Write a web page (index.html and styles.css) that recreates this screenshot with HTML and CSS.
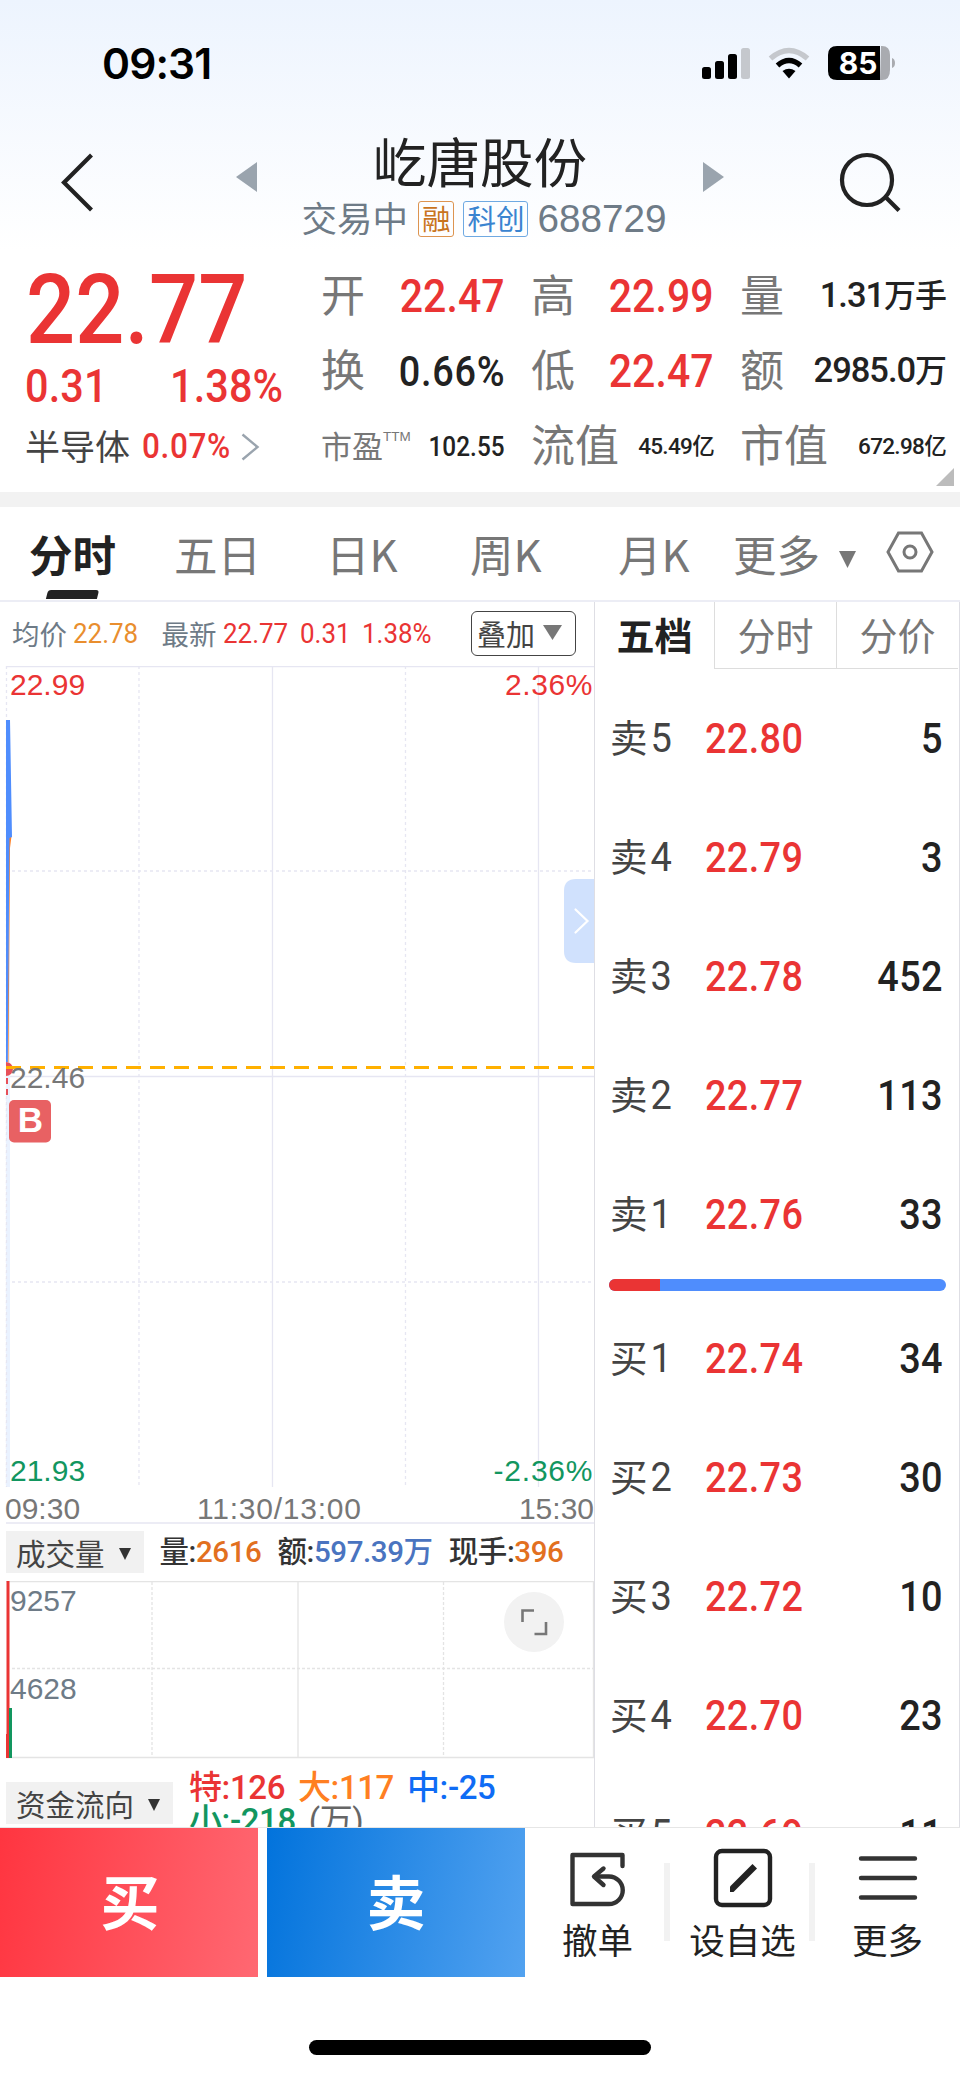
FILE: index.html
```html
<!DOCTYPE html>
<html lang="zh-CN">
<head>
    <meta charset="UTF-8">
    <meta name="viewport" content="width=device-width, initial-scale=1.0">
    <title>屹唐股份 688729</title>
    <link rel="stylesheet" href="styles.css">
</head>
<body>
    <div class="screen">
        <!-- Status bar -->
        <div class="status-bar">
            <span class="clock">09:31</span>
            <svg class="status-icons" width="194" height="36" viewBox="0 0 194 36">
                <rect x="0" y="21" width="9" height="12" rx="2.5"/>
                <rect x="13" y="15" width="9" height="18" rx="2.5"/>
                <rect x="26" y="8" width="9" height="25" rx="2.5"/>
                <rect x="39" y="2" width="9" height="31" rx="2.5" fill="#c5c8cd"/>
                <path d="M68.5 12.5 Q87 -3.5 105.5 12.5" fill="none" stroke="#c5c8cd" stroke-width="5.5"/>
                <path d="M75.5 19.5 Q87 9.5 98.5 19.5" fill="none" stroke="#000" stroke-width="5.5"/>
                <path d="M80.5 25 Q87 20.5 93.5 25 L87 32.5 Z"/>
                <path d="M179 0 H180 Q188 0 188 9 V24 Q188 34 180 34 H178 Z" fill="#a9abb0"/>
                <path d="M135 0 H178 V34 H135 Q126 34 126 25 V9 Q126 0 135 0 Z"/>
                <path d="M190 12 Q193 13 193 17 Q193 21 190 22 Z" fill="#a9abb0"/>
                <text class="battery-text" x="156" y="28">85</text>
            </svg>
        </div>

        <!-- Header -->
        <div class="header">
            <svg class="back" width="40" height="60" viewBox="0 0 40 60"><path d="M33.5 3 L6 30.5 L33.5 58"/></svg>
            <div class="arrow prev"></div>
            <div class="stock">
                <div class="stock-name">屹唐股份</div>
                <div class="stock-sub">
                    <span class="state">交易中</span>
                    <span class="badge orange">融</span>
                    <span class="badge blue">科创</span>
                    <span class="code">688729</span>
                </div>
            </div>
            <div class="arrow next"></div>
            <svg class="search" width="64" height="64" viewBox="0 0 64 64"><circle cx="29" cy="29" r="25"/><path d="M47.5 46 L61 59.5"/></svg>
        </div>

        <!-- Quote -->
        <div class="quote">
            <div class="quote-main">
                <div class="last red"><span class="num">22.77</span></div>
                <div class="change red"><span class="num">0.31</span><span class="num">1.38%</span></div>
                <div class="sector">
                    <span class="sector-name">半导体</span>
                    <span class="num red">0.07%</span>
                    <svg width="20" height="28" viewBox="0 0 20 28"><path d="M1.5 1.5 L16.5 14 L1.5 26.5"/></svg>
                </div>
            </div>
            <div class="quote-grid">
                <div class="cell"><span class="label">开</span><span class="num big red">22.47</span></div>
                <div class="cell"><span class="label">高</span><span class="num big red">22.99</span></div>
                <div class="cell"><span class="label">量</span><span class="amount mid">1.31<b>万手</b></span></div>
                <div class="cell"><span class="label">换</span><span class="num pct">0.66%</span></div>
                <div class="cell"><span class="label">低</span><span class="num big red">22.47</span></div>
                <div class="cell"><span class="label">额</span><span class="amount mid">2985.0<b>万</b></span></div>
                <div class="cell"><span class="label small">市盈<sup>TTM</sup></span><span class="num pe">102.55</span></div>
                <div class="cell"><span class="label">流值</span><span class="amount tiny">45.49<b>亿</b></span></div>
                <div class="cell"><span class="label">市值</span><span class="amount tiny">672.98<b>亿</b></span></div>
            </div>
            <div class="corner"></div>
        </div>

        <!-- Period tabs -->
        <div class="tabs">
            <span class="tab active">分时</span>
            <span class="tab">五日</span>
            <span class="tab">日K</span>
            <span class="tab">周K</span>
            <span class="tab">月K</span>
            <span class="tab">更多</span>
            <svg class="tab-caret" width="17" height="17" viewBox="0 0 17 17"><path d="M0 0 H17 L8.5 17 Z"/></svg>
            <svg class="tab-gear" width="48" height="42" viewBox="0 0 48 42"><path d="M12.5 2 H35.5 L46 21 L35.5 40 H12.5 L2 21 Z"/><circle cx="24" cy="21" r="6"/></svg>
        </div>

        <div class="main">
            <div class="left">
                <div class="info">
                    <span class="info-label">均价</span>
                    <span class="info-num avg">22.78</span>
                    <span class="info-label latest">最新</span>
                    <span class="info-num red">22.77</span>
                    <span class="info-num red">0.31</span>
                    <span class="info-num red">1.38%</span>
                    <span class="overlay-btn">叠加<svg width="19" height="15" viewBox="0 0 19 15"><path d="M0 0 H19 L9.5 15 Z"/></svg></span>
                </div>

                <!-- Price chart -->
                <svg class="price-chart" width="594" height="859" viewBox="0 666 594 859">
                    <g class="grid">
                        <path d="M6 666.5 H594 M272.5 666 V1487 M538.5 666 V1487 M6 1076.5 H594"/>
                        <path class="dash" d="M6.5 666 V1487 M139 666 V1487 M405.5 666 V1487 M12 871 H594 M12 1282 H594"/>
                        <path class="base" d="M6 1523 H594"/>
                    </g>
                    <rect x="6" y="845" width="4" height="642" fill="#eaf2ff"/>
                    <path class="dash-line" d="M6.5 1096 V1487"/>
                    <path d="M9 836 H11.5 L10 848 L8.5 1062 H7.5 Z" fill="#ff7f22"/>
                    <path d="M6 720 H10 L12 837 L9.5 838 L7.8 1062 H6 Z" fill="#4f8dfd"/>
                    <path d="M7 1078 V1095" stroke="#e75059" stroke-width="2" stroke-dasharray="6 5"/>
                    <path d="M6 1062 A7 7 0 0 1 6 1076 Z" fill="#e75059"/>
                    <path d="M6 1067.5 H594" stroke="#ffb000" stroke-width="3" stroke-dasharray="15 9"/>
                    <text class="red" x="10" y="695">22.99</text>
                    <text class="red" x="505" y="695" textLength="87.5">2.36%</text>
                    <text x="10" y="1088">22.46</text>
                    <text class="green" x="10" y="1481">21.93</text>
                    <text class="green" x="493.5" y="1481" textLength="99">-2.36%</text>
                    <text x="5" y="1519">09:30</text>
                    <text x="197" y="1519" textLength="164">11:30/13:00</text>
                    <text class="end" x="594" y="1519">15:30</text>
                    <rect x="9" y="1100" width="42" height="42.5" rx="5" fill="#e86163"/>
                    <text class="buy-mark" x="30.5" y="1132">B</text>
                    <path d="M594 879 H576 Q564 879 564 891 V951 Q564 963 576 963 H594 Z" fill="#d0e1fd"/>
                    <path d="M575.5 909.5 L587.5 921 L575.5 932.5" fill="none" stroke="#fff" stroke-width="2.2" stroke-linecap="round"/>
                </svg>

                <!-- Volume -->
                <div class="vol-head">
                    <span class="picker">成交量<svg width="12" height="12" viewBox="0 0 12 12"><path d="M0 0 H12 L6 12 Z"/></svg></span>
                    <span class="stat">量:<i class="c-orange">2616</i></span>
                    <span class="stat">额:<i class="c-blue">597.39万</i></span>
                    <span class="stat">现手:<i class="c-orange">396</i></span>
                </div>
                <svg class="vol-chart" width="594" height="178" viewBox="0 1581 594 178">
                    <g class="vgrid">
                        <path d="M6 1581.5 H593.5 V1757.5 H6 M298 1582 V1757"/>
                        <path class="dash" d="M152 1582 V1757 M443.5 1582 V1757 M12 1668.5 H593"/>
                    </g>
                    <rect x="6.5" y="1581" width="3" height="177" fill="#ea3434"/>
                    <rect x="6" y="1734" width="3" height="24" fill="#ea3434"/>
                    <rect x="9" y="1708" width="3" height="50" fill="#12965f"/>
                    <text x="10" y="1611">9257</text>
                    <text x="10" y="1699">4628</text>
                    <circle cx="534" cy="1622" r="30" fill="#f2f2f2"/>
                    <path d="M522.5 1622 V1610.5 H534 M546 1622 V1634 H534.5" fill="none" stroke="#777" stroke-width="2.6"/>
                </svg>

                <!-- Money flow -->
                <div class="flow">
                    <span class="picker">资金流向<svg width="12" height="12" viewBox="0 0 12 12"><path d="M0 0 H12 L6 12 Z"/></svg></span>
                    <div class="flow-values">
                        <div><span class="red">特:126</span><span class="c-amber">大:117</span><span class="c-azure">中:-25</span></div>
                        <div><span class="green">小:-218</span><span class="unit">(万)</span></div>
                    </div>
                </div>
            </div>

            <!-- Order book -->
            <div class="right">
                <div class="book-tabs">
                    <span class="active">五档</span>
                    <span>分时</span>
                    <span>分价</span>
                </div>
                <div class="book">
                    <div class="row"><span class="side">卖<i>5</i></span><span class="price">22.80</span><span class="qty">5</span></div>
                    <div class="row"><span class="side">卖<i>4</i></span><span class="price">22.79</span><span class="qty">3</span></div>
                    <div class="row"><span class="side">卖<i>3</i></span><span class="price">22.78</span><span class="qty">452</span></div>
                    <div class="row"><span class="side">卖<i>2</i></span><span class="price">22.77</span><span class="qty">113</span></div>
                    <div class="row"><span class="side">卖<i>1</i></span><span class="price">22.76</span><span class="qty">33</span></div>
                    <div class="ratio"><div class="ratio-buy" style="width: 15.2%"></div></div>
                    <div class="row"><span class="side">买<i>1</i></span><span class="price">22.74</span><span class="qty">34</span></div>
                    <div class="row"><span class="side">买<i>2</i></span><span class="price">22.73</span><span class="qty">30</span></div>
                    <div class="row"><span class="side">买<i>3</i></span><span class="price">22.72</span><span class="qty">10</span></div>
                    <div class="row"><span class="side">买<i>4</i></span><span class="price">22.70</span><span class="qty">23</span></div>
                    <div class="row"><span class="side">买<i>5</i></span><span class="price">22.69</span><span class="qty">11</span></div>
                </div>
            </div>
        </div>

        <!-- Trade bar -->
        <div class="trade-bar">
            <div class="trade buy">买</div>
            <div class="trade sell">卖</div>
            <div class="action">
                <svg width="60" height="60" viewBox="0 0 60 60">
                    <path d="M54.5 18 V7 H4.5 V56 H41 A13.5 13.5 0 0 0 41 28.5 H27" stroke="#333"/>
                    <path d="M35.5 20.5 L26 28.5 L35.5 37" stroke="#333"/>
                </svg>
                <span>撤单</span>
            </div>
            <div class="divider"></div>
            <div class="action">
                <svg width="60" height="60" viewBox="0 0 60 60">
                    <rect x="3" y="3" width="54" height="54" rx="6"/>
                    <path d="M17 44 V38.5 L39.5 16 L44 20.5 L20.5 44 Z" class="pen"/>
                </svg>
                <span>设自选</span>
            </div>
            <div class="divider"></div>
            <div class="action last-action">
                <svg width="60" height="60" viewBox="0 0 60 60"><path d="M3 10.5 H57 M3 30 H57 M3 49.5 H57" stroke="#333"/></svg>
                <span>更多</span>
            </div>
        </div>
        <div class="home-indicator"></div>
    </div>
</body>
</html>
```

FILE: styles.css
```css
* {
    box-sizing: border-box;
}

body {
    margin: 0;
    background: #fff;
    font-family: "Noto Sans CJK SC", sans-serif;
    color: #222;
}

i, b {
    font-style: normal;
    font-weight: inherit;
}

.screen {
    width: 960px;
    height: 2079px;
    overflow: hidden;
    display: flex;
    flex-direction: column;
    background: linear-gradient(#edf4fe 0, #fff 250px);
}

.red { color: #ea3434; }
.green { color: #12965f; }
.c-orange { color: #e2701f; }
.c-blue { color: #4a74c0; }
.c-amber { color: #ff7f22; }
.c-azure { color: #0f6cf5; }

/* Narrow figures for prices */
.num {
    display: block;
    font-family: Roboto, sans-serif;
    font-weight: 500;
    letter-spacing: 0.003em;
    transform: scaleX(0.9);
    transform-origin: left center;
}

.amount {
    font-family: Roboto, "Noto Sans CJK SC", sans-serif;
    font-weight: 500;
    letter-spacing: -0.03em;
}

/* Status bar */
.status-bar {
    height: 128px;
    padding: 0 64px 0 102px;
    display: flex;
    align-items: center;
    justify-content: space-between;
}

.clock {
    font: 600 42.5px/50px Inter, sans-serif;
    letter-spacing: -0.9px;
    color: #000;
}

.battery-text {
    font: 700 30px Inter, sans-serif;
    fill: #fff;
    text-anchor: middle;
}

/* Header */
.header {
    height: 127px;
    display: grid;
    grid-template-columns: 236px 21px 446px 21px 1fr;
    align-items: start;
}

.back, .search {
    fill: none;
    stroke: #222;
    stroke-width: 4.2;
}

.back {
    margin: 24px 0 0 58px;
}

.search {
    margin: 23px 0 0 114px;
}

.arrow {
    width: 21px;
    height: 30px;
    margin-top: 34px;
    background: #9aa4ae;
}

.prev { clip-path: polygon(100% 0, 100% 100%, 0 50%); }
.next { clip-path: polygon(0 0, 100% 50%, 0 100%); }

.stock {
    display: flex;
    flex-direction: column;
    align-items: center;
}

.stock-name {
    font-size: 53.5px;
    line-height: 64px;
}

.stock-sub {
    display: flex;
    align-items: center;
    height: 54px;
    margin-left: 8px;
    color: #6e7b87;
}

.state {
    font-size: 35.5px;
    line-height: 40px;
    margin-top: -4px;
}

.badge {
    height: 36px;
    padding: 0 3px;
    font-size: 28.5px;
    line-height: 31px;
    border: 1.5px solid;
    border-radius: 3px;
    margin-left: 10px;
}

.badge.blue { margin-left: 9px; }
.orange { color: #c9741e; border-color: #dd9450; }
.blue { color: #3a84d0; border-color: #6fa9e2; }

.code {
    font: 38.7px/40px "Liberation Sans", sans-serif;
    margin-left: 9px;
}

/* Quote */
.quote {
    position: relative;
    height: 237px;
    display: flex;
    background: #fff;
}

.quote-main {
    width: 321px;
    padding-left: 25px;
}

.last {
    height: 110px;
    padding-left: 1px;
    font-size: 96px;
    line-height: 110px;
}

.change {
    display: flex;
    justify-content: space-between;
    width: 271px;
    font-size: 46px;
    line-height: 42px;
}

.sector {
    display: flex;
    align-items: center;
    height: 80px;
    font-size: 35px;
    line-height: 40px;
}

.sector-name {
    color: #444;
    margin-top: -4px;
}

.sector .num {
    margin-left: 12px;
    letter-spacing: 0.02em;
}

.sector svg {
    fill: none;
    stroke: #9aa4ae;
    stroke-width: 2.4;
}

.quote-grid {
    display: grid;
    grid-template-columns: 184px 183px 206px;
    grid-template-rows: 75px 75px 75px;
    column-gap: 26px;
    padding-top: 4px;
}

.cell {
    display: flex;
    align-items: center;
    justify-content: space-between;
    white-space: nowrap;
    line-height: 50px;
}

.cell .num { transform-origin: right center; }

.label {
    font-size: 44px;
    color: #777;
    margin-top: -7px;
}

.label.small {
    font-size: 31px;
    margin-top: -3px;
}

.label sup {
    font: 13.5px/13px "Liberation Sans", sans-serif;
    vertical-align: 17px;
}

.big { font-size: 45.5px; }
.pct { font-size: 42px; letter-spacing: 0.02em; }
.mid { font-size: 34.5px; }
.mid b { font-size: 32px; }
.pe { font-size: 27px; }
.tiny { font-size: 22.5px; }
.amount { margin-top: -2px; }

.corner {
    position: absolute;
    right: 6px;
    bottom: 6px;
    width: 18px;
    height: 18px;
    background: #bcbcbc;
    clip-path: polygon(100% 0, 100% 100%, 0 100%);
}

/* Tabs */
.tabs {
    height: 110px;
    border-top: 15px solid #f2f2f2;
    border-bottom: 2px solid #ecedf5;
    padding-left: 29px;
    display: grid;
    grid-template-columns: 145px 152px 144px 148px 115px 106px 47px 50px;
    align-items: center;
    background: #fff;
    font-size: 43.5px;
    color: #777;
}

.tab {
    line-height: 91px;
    margin-top: -1px;
}

.tab.active {
    position: relative;
    color: #222;
    font-weight: 700;
}

.tab.active::after {
    content: "";
    position: absolute;
    left: 18px;
    bottom: 0;
    width: 51px;
    height: 9px;
    border-radius: 3px 3px 0 0;
    background: #222;
    transform: skewX(-14deg);
}

.tab-caret { fill: #777; margin-top: 12px; }

.tab-gear {
    fill: none;
    stroke: #777;
    stroke-width: 3;
    margin-top: -4px;
}

/* Main area */
.main {
    height: 1226px;
    display: flex;
    overflow: hidden;
    border-bottom: 1px solid #e6e6e6;
    background: #fff;
}

.left {
    width: 594px;
    flex: none;
}

.left svg { display: block; }

.info {
    height: 64px;
    padding-left: 12px;
    display: flex;
    align-items: center;
}

.info-label {
    font-size: 27.5px;
    line-height: 32px;
    color: #6e7b87;
    margin-top: -3px;
}

.latest { margin-left: 17px; }

.info-num {
    font: 400 28.5px/32px Roboto, sans-serif;
    margin-left: 6px;
    transform: scaleX(0.91);
    transform-origin: left center;
}

.info-num + .info-num { margin-left: 6px; }
.avg { color: #e98e2e; }

.overlay-btn {
    display: flex;
    align-items: center;
    width: 105px;
    height: 45px;
    margin: -2px 18px 0 auto;
    padding-left: 5px;
    border: 1.5px solid #444;
    border-radius: 6px;
    font-size: 29px;
    line-height: 36px;
    color: #444;
}

.overlay-btn svg {
    margin: -2px 0 0 8px;
    fill: #777;
}

.price-chart text, .vol-chart text {
    font: 30px "Liberation Sans", sans-serif;
    fill: #777;
}

.vol-chart text { fill: #6e7b87; }
.price-chart .red { fill: #ea3434; }
.price-chart .green { fill: #12965f; }
.price-chart .end { text-anchor: end; }

.price-chart .buy-mark {
    font-size: 35px;
    font-weight: 700;
    fill: #fff;
    text-anchor: middle;
}

.grid path, .vgrid path, .dash-line {
    fill: none;
    stroke: #e6e6f2;
    stroke-width: 1.3;
}

.vgrid path { stroke: #e4e4e4; }
.grid .dash, .dash-line { stroke-dasharray: 3 3; }
.vgrid .dash { stroke-dasharray: 3 2; }

/* Indicator headers */
.vol-head {
    height: 56px;
    padding-left: 6px;
    display: flex;
    align-items: center;
}

.picker {
    display: flex;
    align-items: center;
    height: 42px;
    padding: 0 13px 0 10px;
    background: #f1f1f1;
    font-size: 29.5px;
    line-height: 38px;
    color: #444;
}

.picker svg {
    margin: 4px 0 0 14px;
    fill: #333;
}

.vol-head .picker { margin-top: -2px; }

.stat {
    font: 500 29.5px/40px Roboto, "Noto Sans CJK SC", sans-serif;
    letter-spacing: -0.4px;
    color: #333;
    margin-left: 16px;
    margin-top: -2px;
}

.flow {
    height: 90px;
    padding: 23px 0 0 6px;
    display: flex;
    align-items: flex-start;
}

.flow-values {
    margin: -11px 0 0 16px;
    font: 500 33px/33px Roboto, "Noto Sans CJK SC", sans-serif;
    letter-spacing: -0.4px;
}

.flow-values div {
    display: flex;
    gap: 13px;
}

.unit {
    color: #666;
    font-weight: 400;
}

/* Order book */
.right {
    flex: 1;
    border-left: 1.5px solid #dedee4;
    border-right: 1px solid #dedee4;
}

.book-tabs {
    display: flex;
    height: 67px;
    font-size: 38px;
    line-height: 63px;
    text-align: center;
    color: #777;
}

.book-tabs span {
    width: 122px;
    border-left: 1.5px solid #ddd;
    border-bottom: 1.5px solid #ddd;
}

.book-tabs .active {
    width: 119px;
    border: none;
    color: #222;
    font-weight: 700;
}

.book {
    padding: 10px 16px 0 15px;
}

.row {
    height: 119px;
    display: flex;
    align-items: center;
}

.side {
    width: 95px;
    font-size: 37.5px;
    line-height: 44px;
    color: #444;
    margin-top: -2px;
}

.side i {
    display: inline-block;
    font: 400 40px/44px Roboto, sans-serif;
    margin-left: 2px;
    transform: scaleX(0.95);
}

.price, .qty {
    font: 500 42px/50px Roboto, sans-serif;
    letter-spacing: 0.4px;
    transform: scaleX(0.9);
    transform-origin: left center;
}

.price { color: #ea3434; }

.qty {
    flex: 1;
    text-align: right;
    transform-origin: right center;
}

.ratio {
    height: 12px;
    margin: 5px -3px 8px -1px;
    border-radius: 6px;
    background: #4f8dfd;
    overflow: hidden;
}

.ratio-buy {
    height: 12px;
    background: #ea3434;
}

/* Trade bar */
.trade-bar {
    height: 149px;
    display: flex;
    background: #fff;
}

.trade {
    width: 258px;
    margin-right: 9px;
    padding-left: 2px;
    font-size: 59px;
    font-weight: 700;
    line-height: 144px;
    text-align: center;
    color: #fff;
}

.buy { background: linear-gradient(100deg, #ff3540, #ff6872); }
.sell { background: linear-gradient(100deg, #0273dc, #52a2f0); margin-right: 0; padding-left: 0; }

.action {
    width: 139px;
    padding: 20px 0 0 6px;
    display: flex;
    flex-direction: column;
    align-items: center;
    gap: 8px;
    font-size: 35.5px;
    line-height: 46px;
}

.last-action { padding-left: 0; width: 145px; }

.action svg {
    fill: none;
    stroke: #222;
    stroke-width: 4.4;
    stroke-linecap: round;
    stroke-linejoin: round;
}

.action .pen {
    fill: #222;
    stroke: none;
}

.divider {
    width: 6px;
    height: 78px;
    margin-top: 35px;
    background: #f2f2f2;
}

.home-indicator {
    width: 342px;
    height: 15px;
    margin: 63px auto 0;
    border-radius: 8px;
    background: #000;
}
```
